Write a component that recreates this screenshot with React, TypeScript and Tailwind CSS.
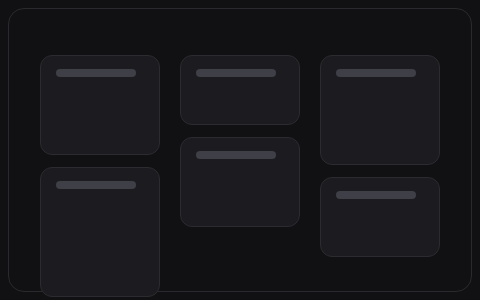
import React from 'react';

const columns: number[][] = [
  [100, 130],
  [70, 90],
  [110, 80],
];

const Card: React.FC<{ height: number }> = ({ height }) => (
  <div
    className="w-[120px] shrink-0 rounded-xl border border-[#2b2b30] bg-[#1c1c20] px-[15px] pt-[13px]"
    style={{ height }}
  >
    <div className="h-2 w-20 rounded-full bg-[#3f3f47]" />
  </div>
);

export default function App() {
  return (
    <div className="h-screen w-full bg-[#111113] p-2">
      <div className="h-full rounded-2xl border border-[#2a2a2e] px-[31px] pt-[46px]">
        <div className="flex gap-5">
          {columns.map((col, i) => (
            <div key={i} className="flex flex-col gap-3">
              {col.map((h, j) => (
                <Card key={j} height={h} />
              ))}
            </div>
          ))}
        </div>
      </div>
    </div>
  );
}
